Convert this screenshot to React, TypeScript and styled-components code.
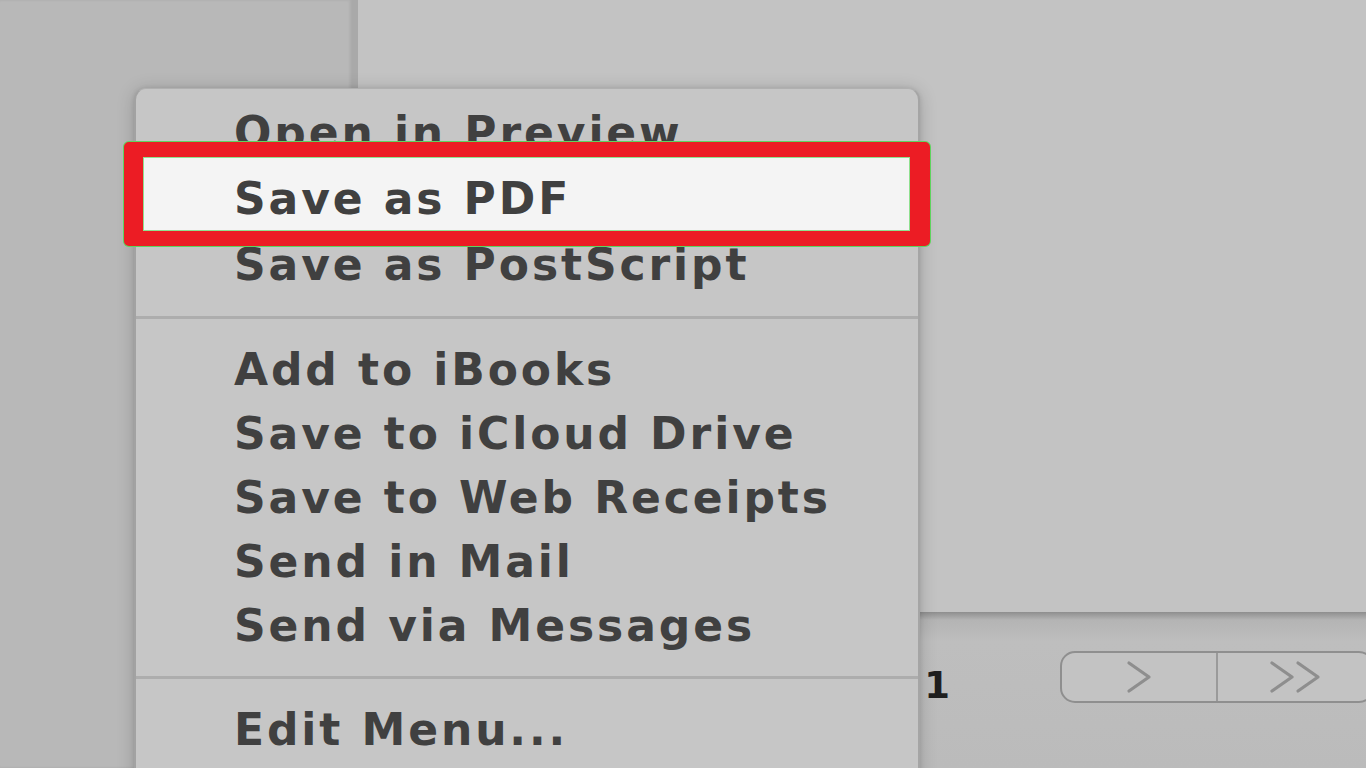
import React from "react";
import styled, { createGlobalStyle } from "styled-components";

const Global = createGlobalStyle`
  html, body { margin: 0; padding: 0; width: 1366px; height: 768px; overflow: hidden; }
  body { font-family: "DejaVu Sans", "Liberation Sans", sans-serif; background: #b7b7b7; }
`;

const Screen = styled.div`
  position: relative;
  width: 1366px;
  height: 768px;
  display: grid;
  grid-template-columns: 358px 1fr;
  background: #b7b7b7;
  overflow: hidden;
`;

const Sidebar = styled.div`
  background: #b8b8b8;
  border-right: 6px solid #a9a9a9;
  box-shadow: inset -2px 0 3px rgba(0, 0, 0, 0.08);
`;

const Main = styled.div`
  display: flex;
  flex-direction: column;
`;

const PreviewArea = styled.div`
  height: 612px;
  background: #c3c3c3;
`;

const BottomBar = styled.div`
  flex: 1;
  display: flex;
  align-items: center;
  justify-content: flex-end;
  gap: 110px;
  padding-bottom: 26px;
  background: linear-gradient(#8e8e8e 0, #9d9d9d 3px, #b4b4b4 8px, #bebebe 30px, #bbbbbb 100%);
`;

const PageNumber = styled.span`
  font-family: "DejaVu Sans", sans-serif;
  font-weight: bold;
  font-size: 37px;
  color: #1f1f1f;
  margin-top: 16px;
`;

const Segmented = styled.div`
  display: flex;
  width: 310px;
  height: 48px;
  margin-right: -8px;
  border: 2px solid #8f8f8f;
  border-radius: 15px;
  background: #c3c3c3;
  overflow: hidden;
`;

const Segment = styled.div<{ $divider?: boolean }>`
  flex: 1;
  display: flex;
  align-items: center;
  justify-content: center;
  border-left: ${(p) => (p.$divider ? "2px solid #9a9a9a" : "none")};
`;

const Menu = styled.div`
  position: absolute;
  left: 134px;
  top: 88px;
  width: 786px;
  height: 720px;
  background: #c6c6c6;
  border-radius: 12px;
  border-left: 2px solid #a2a2a2;
  border-top: 1px solid #b0b0b0;
  border-right: 2px solid #a5a5a5;
  box-shadow: 0 2px 18px rgba(0, 0, 0, 0.18), 0 0 4px rgba(0, 0, 0, 0.1);
  padding-top: 10px;
  box-sizing: border-box;
  display: flex;
  flex-direction: column;
`;

const Item = styled.div<{ $h?: number }>`
  position: relative;
  height: ${(p) => p.$h ?? 64}px;
  display: flex;
  align-items: center;
  padding-left: 98px;
  font-family: "DejaVu Sans", "Liberation Sans", sans-serif;
  font-weight: bold;
  font-size: 44px;
  letter-spacing: 2.9px;
  color: #404040;
  white-space: nowrap;
`;

const Separator = styled.div`
  height: 40px;
  display: flex;
  align-items: center;
  &::after {
    content: "";
    display: block;
    width: 100%;
    height: 3px;
    background: #adadad;
  }
`;

const HighlightItem = styled(Item)`
  z-index: 1;
`;

const Annotation = styled.div`
  position: absolute;
  left: -12px;
  right: -12px;
  top: -23px;
  bottom: -15px;
  border-style: solid;
  border-color: #ec1c24;
  border-width: 15px 20px 15px 19px;
  border-radius: 5px;
  background: #f4f4f4;
  box-shadow: 0 0 0 1px #5fd35f, inset 0 0 0 1px #8fe08f;
  z-index: -1;
`;

const Chevron = ({ double }: { double?: boolean }) => (
  <svg width={double ? 56 : 30} height="34" viewBox={double ? "0 0 56 34" : "0 0 30 34"} fill="none">
    <path d="M5 3 L25 17 L5 31" stroke="#8e8e8e" strokeWidth="3.2" strokeLinecap="round" strokeLinejoin="round" />
    {double && (
      <path d="M31 3 L51 17 L31 31" stroke="#8e8e8e" strokeWidth="3.2" strokeLinecap="round" strokeLinejoin="round" />
    )}
  </svg>
);

export default function App() {
  return (
    <>
      <Global />
      <Screen>
        <Sidebar />
        <Main>
          <PreviewArea />
          <BottomBar>
            <PageNumber>1</PageNumber>
            <Segmented>
              <Segment>
                <Chevron />
              </Segment>
              <Segment $divider>
                <Chevron double />
              </Segment>
            </Segmented>
          </BottomBar>
        </Main>
        <Menu>
          <Item $h={66}>Open in Preview</Item>
          <HighlightItem $h={66}>
            <Annotation />
            Save as PDF
          </HighlightItem>
          <Item $h={66}>Save as PostScript</Item>
          <Separator />
          <Item>Add to iBooks</Item>
          <Item>Save to iCloud Drive</Item>
          <Item>Save to Web Receipts</Item>
          <Item>Send in Mail</Item>
          <Item>Send via Messages</Item>
          <Separator />
          <Item>Edit Menu...</Item>
        </Menu>
      </Screen>
    </>
  );
}
